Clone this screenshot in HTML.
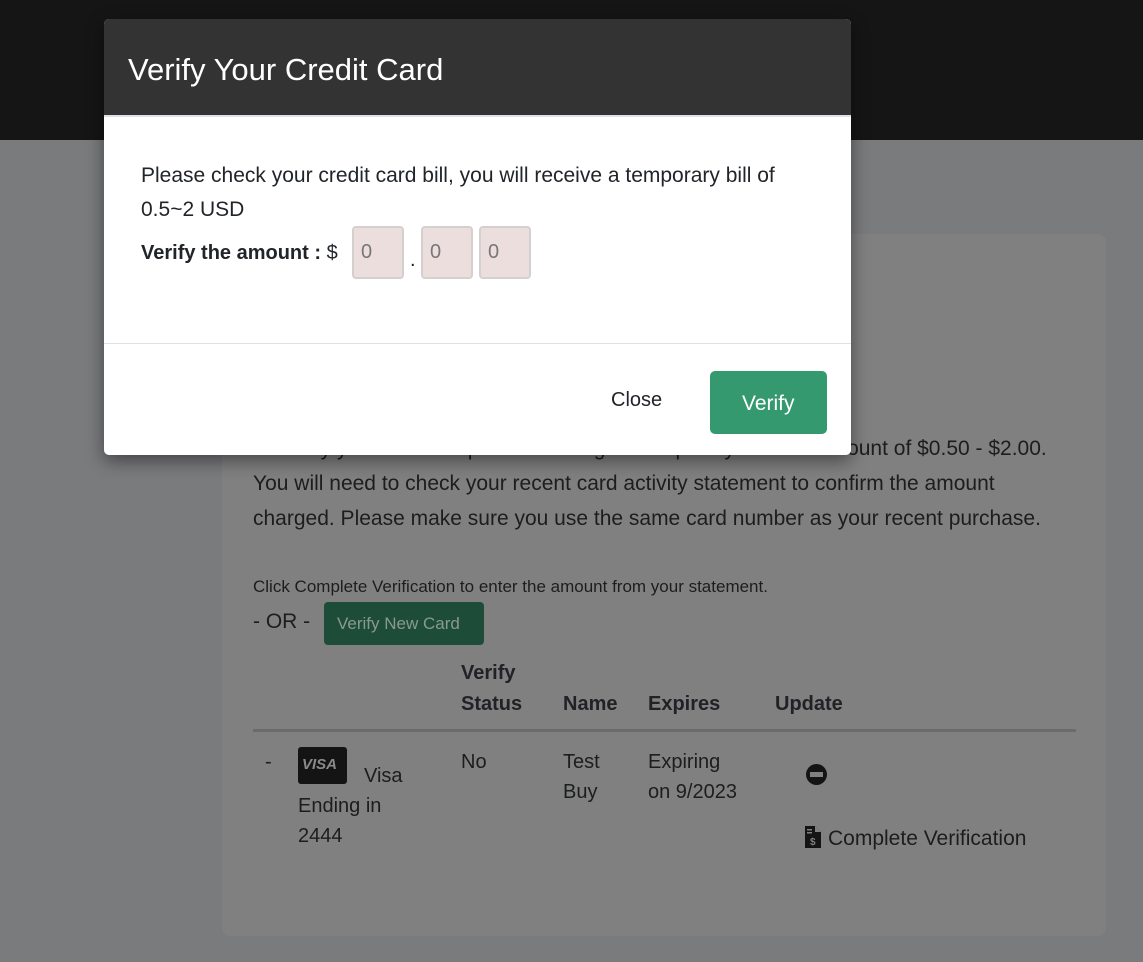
<!DOCTYPE html>
<html><head><meta charset="utf-8"><style>
*{margin:0;padding:0;box-sizing:border-box}
body{width:1143px;height:962px;overflow:hidden;background:#7a7b7d;font-family:"Liberation Sans","DejaVu Sans",sans-serif;color:#1c1d1f;position:relative}
.top{position:absolute;left:0;top:0;width:1143px;height:140px;background:#151515}
.card{position:absolute;left:222px;top:234px;width:884px;height:702px;background:#808080;border-radius:8px}
.a{position:absolute;white-space:nowrap}
.t{font-size:20px}
.c{font-size:21px}
.th{font-weight:bold;font-size:20px;color:#202226}
.modal{position:absolute;left:104px;top:19px;width:747px;height:436px;background:#fff;border-radius:5px;box-shadow:0 6px 18px rgba(0,0,0,.45);overflow:hidden}
.mh{height:98px;background:#333;border-bottom:2px solid #dee2e6;color:#fff;font-size:31px;padding:33px 0 0 24px}
.box{position:absolute;top:207px;width:52px;height:53px;background:#eddede;border:2px solid #d5d0d0;border-radius:4px;font-size:20px;color:#777;padding:13px 0 0 7px}
</style></head><body>
<div class="top"></div>
<div class="card"></div>
<div class="a c" style="left:253px;top:437px">To verify your ownership we will charge a temporary random amount of $0.50 - $2.00.</div>
<div class="a c" style="left:253px;top:472px">You will need to check your recent card activity statement to confirm the amount</div>
<div class="a c" style="left:253px;top:507px">charged. Please make sure you use the same card number as your recent purchase.</div>
<div class="a" style="left:253px;top:577px;font-size:17px">Click Complete Verification to enter the amount from your statement.</div>
<div class="a" style="left:253px;top:610px;font-size:21px">- OR -</div>
<div class="a" style="left:324px;top:602px;width:160px;height:43px;background:#1d4d38;border-radius:4px;color:#8a9990;font-size:17px;padding:12px 0 0 13px">Verify New Card</div>
<div class="a th" style="left:461px;top:662px">Verify</div>
<div class="a th" style="left:461px;top:693px">Status</div>
<div class="a th" style="left:563px;top:693px">Name</div>
<div class="a th" style="left:648px;top:693px">Expires</div>
<div class="a th" style="left:775px;top:693px">Update</div>
<div class="a" style="left:253px;top:729px;width:823px;height:3px;background:#6b6b6b"></div>
<div class="a t" style="left:265px;top:751px">-</div>
<div class="a" style="left:298px;top:747px;width:49px;height:37px;background:#141414;border-radius:3px;color:#8a8a8a;font-weight:bold;font-style:italic;font-size:15px;padding:9px 0 0 4px">VISA</div>
<div class="a t" style="left:364px;top:765px">Visa</div>
<div class="a t" style="left:298px;top:795px">Ending in</div>
<div class="a t" style="left:298px;top:825px">2444</div>
<div class="a t" style="left:461px;top:751px">No</div>
<div class="a t" style="left:563px;top:751px">Test</div>
<div class="a t" style="left:563px;top:781px">Buy</div>
<div class="a t" style="left:648px;top:751px">Expiring</div>
<div class="a t" style="left:648px;top:781px">on 9/2023</div>
<div class="a" style="left:806px;top:764px;width:21px;height:21px;border-radius:50%;background:#141414"><div style="position:absolute;left:4px;top:8px;width:13px;height:5px;background:#808080"></div></div>
<svg class="a" style="left:805px;top:826px" width="16" height="22" viewBox="0 0 16 22"><path d="M0 0h10l6 6v16H0z" fill="#141414"/><path d="M10 0v6h6z" fill="#808080"/><text x="5" y="19" font-size="10" font-weight="bold" fill="#808080" font-family="Liberation Sans">$</text><rect x="2" y="3" width="5" height="1.5" fill="#808080"/><rect x="2" y="6" width="5" height="1.5" fill="#808080"/></svg>
<div class="a" style="left:828px;top:827px;font-size:21px">Complete Verification</div>

<div class="modal">
<div class="mh">Verify Your Credit Card</div>
<div class="a" style="left:37px;top:145px;font-size:21px;color:#212529">Please check your credit card bill, you will receive a temporary bill of</div>
<div class="a" style="left:37px;top:179px;font-size:21px;color:#212529">0.5~2 USD</div>
<div class="a" style="left:37px;top:223px;font-size:20px;color:#212529"><b>Verify the amount :</b> $</div>
<div class="box" style="left:248px">0</div>
<div class="a" style="left:306px;top:230px;font-size:20px">.</div>
<div class="box" style="left:317px">0</div>
<div class="box" style="left:375px">0</div>
<div class="a" style="left:0;top:324px;width:747px;height:1px;background:#dee2e6"></div>
<div class="a" style="left:507px;top:370px;font-size:20px;color:#212529">Close</div>
<div class="a" style="left:606px;top:352px;width:117px;height:63px;background:#359970;border-radius:5px;color:#fff;font-size:21px;padding:21px 0 0 32px">Verify</div>
</div>
</body></html>
